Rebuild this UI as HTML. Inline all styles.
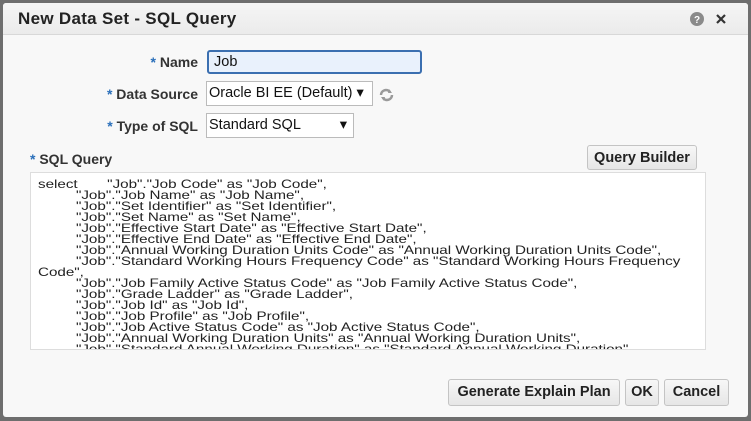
<!DOCTYPE html>
<html><head><style>
body{margin:0;width:751px;height:421px;background:#6e6e6e;font-family:"Liberation Sans",Arial,sans-serif;position:relative;overflow:hidden}
.dlg{position:absolute;left:3px;top:3px;width:745px;height:414px;background:#f8f8f8;border-radius:3px}
.title{position:absolute;left:0;top:0;width:745px;height:31px;background:linear-gradient(#f5f5f5,#ebebeb);border-bottom:1px solid #d8d8d8;border-radius:3px 3px 0 0}
.title span{position:absolute;left:15px;top:6px;font-size:17px;font-weight:bold;color:#222;letter-spacing:0.3px}
.lbl{position:absolute;font-size:14px;font-weight:bold;color:#333;text-align:right;width:192px}
.lbl b{color:#2a6fba;font-weight:bold}
.box{position:absolute;background:#fff;border:1px solid #bbb;font-size:14.5px;color:#111;box-sizing:border-box;padding:3px 2px}
.btn{position:absolute;background:linear-gradient(#f7f7f7,#e6e6e6);border:1px solid #c4c4c4;border-radius:3px;font-size:14.5px;font-weight:bold;color:#222;text-align:center;box-sizing:border-box;line-height:24px}
.ta{position:absolute;left:30px;top:172px;width:676px;height:178px;background:#fff;border:1px solid #ddd;box-sizing:border-box;overflow:hidden}
.ta div{position:absolute;left:7px;top:6px;font-size:12px;line-height:11px;color:#222;white-space:pre;transform:scaleX(1.265);transform-origin:0 0}
</style></head><body>
<div class="dlg">
<div class="title"><span>New Data Set - SQL Query</span>
<svg style="position:absolute;left:687px;top:9px" width="14" height="14"><circle cx="7" cy="7" r="7" fill="#8a8a8a"/><text x="7" y="11" font-size="10" font-weight="bold" fill="#fff" text-anchor="middle" font-family="Liberation Sans">?</text></svg>
<svg style="position:absolute;left:712px;top:10px" width="12" height="12"><path d="M2 2L10 10M10 2L2 10" stroke="#333" stroke-width="2.2"/></svg>
</div>
</div>
<div class="lbl" style="left:6px;top:54px"><b>*</b> Name</div>
<div class="box" style="left:207px;top:50px;width:215px;height:24px;background:#e9f1fc;border:2px solid #3b6fb0;border-radius:3px;padding:2px 5px">Job</div>
<div class="lbl" style="left:6px;top:86px"><b>*</b> Data Source</div>
<div class="box" style="left:206px;top:81px;width:167px;height:25px">Oracle BI EE (Default) ▾</div>
<svg style="position:absolute;left:378px;top:87px" width="17" height="16"><path d="M3 8a5 5 0 0 1 9-3M14 8a5 5 0 0 1-9 3" stroke="#9a9a9a" stroke-width="2.5" fill="none"/><path d="M11 2l3 4-4 0z M6 14l-3-4 4 0z" fill="#9a9a9a"/></svg>
<div class="lbl" style="left:6px;top:118px"><b>*</b> Type of SQL</div>
<div class="box" style="left:206px;top:113px;width:148px;height:25px">Standard SQL<span style="position:absolute;right:6px;top:3px">▾</span></div>
<div class="lbl" style="left:30px;top:151px;text-align:left"><b>*</b> SQL Query</div>
<div class="btn" style="left:587px;top:145px;width:110px;height:25px">Query Builder</div>
<div class="ta"><div>select       "Job"."Job Code" as "Job Code",
         "Job"."Job Name" as "Job Name",
         "Job"."Set Identifier" as "Set Identifier",
         "Job"."Set Name" as "Set Name",
         "Job"."Effective Start Date" as "Effective Start Date",
         "Job"."Effective End Date" as "Effective End Date",
         "Job"."Annual Working Duration Units Code" as "Annual Working Duration Units Code",
         "Job"."Standard Working Hours Frequency Code" as "Standard Working Hours Frequency
Code",
         "Job"."Job Family Active Status Code" as "Job Family Active Status Code",
         "Job"."Grade Ladder" as "Grade Ladder",
         "Job"."Job Id" as "Job Id",
         "Job"."Job Profile" as "Job Profile",
         "Job"."Job Active Status Code" as "Job Active Status Code",
         "Job"."Annual Working Duration Units" as "Annual Working Duration Units",
         "Job"."Standard Annual Working Duration" as "Standard Annual Working Duration",</div></div>
<div class="btn" style="left:448px;top:379px;width:172px;height:27px;line-height:25px">Generate Explain Plan</div>
<div class="btn" style="left:625px;top:379px;width:34px;height:27px;line-height:25px">OK</div>
<div class="btn" style="left:664px;top:379px;width:65px;height:27px;line-height:25px">Cancel</div>
</body></html>
